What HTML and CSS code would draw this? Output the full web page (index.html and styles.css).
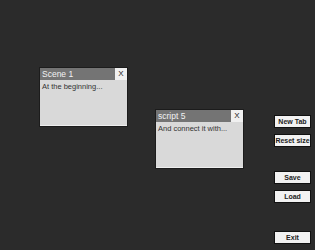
FILE: index.html
```
<!DOCTYPE html>
<html lang="en">
<head>
  <meta charset="UTF-8" />
  <meta name="viewport" content="width=device-width, initial-scale=1.0" />
  <title>Node Editor</title>
  <link rel="stylesheet" href="styles.css">
</head>
<body>
  <div class="canvas">
    <div class="node" style="left: 39px; top: 67px;">
      <div class="node-head">
        <span class="node-title">Scene 1</span>
        <button class="node-close">X</button>
      </div>
      <div class="node-body">At the beginning...</div>
    </div>
    <div class="node" style="left: 155px; top: 109px;">
      <div class="node-head">
        <span class="node-title">script 5</span>
        <button class="node-close">X</button>
      </div>
      <div class="node-body">And connect it with...</div>
    </div>
  </div>

  <div class="toolbar">
    <button class="tool-btn">New Tab</button>
    <button class="tool-btn">Reset size</button>
    <button class="tool-btn gap">Save</button>
    <button class="tool-btn">Load</button>
    <button class="tool-btn gap-lg">Exit</button>
  </div>
</body>
</html>
```

FILE: styles.css
```
html, body {
  margin: 0;
  height: 100%;
}
body {
  display: flex;
  background-color: #2b2b2b;
  font-family: "Liberation Sans", Arial, sans-serif;
  overflow: hidden;
}
.canvas {
  position: relative;
  flex: 1;
}
.node {
  position: absolute;
  width: 87px;
  border: 1px solid #1c1c1c;
  background-color: #d9d9d9;
}
.node-head {
  display: flex;
  height: 12px;
  background-color: #747474;
}
.node-title {
  flex: 1;
  color: #f2f2f2;
  font-size: 8.5px;
  line-height: 12px;
  padding-left: 2px;
}
.node-close {
  width: 12px;
  height: 12px;
  margin: 0;
  padding: 0;
  border: 0;
  background-color: #f0f0f0;
  color: #222;
  font-family: "Liberation Sans", Arial, sans-serif;
  font-size: 8px;
  line-height: 12px;
}
.node-body {
  height: 41px;
  padding: 2px 2px;
  font-size: 7.5px;
  color: #333;
  border-bottom: 1px solid #eee;
}
.toolbar {
  display: flex;
  flex-direction: column;
  width: 37px;
  padding: 115px 4px 0 0;
}
.tool-btn {
  height: 13px;
  margin: 0 0 6px 0;
  padding: 0;
  border: 1px solid #111;
  background-color: #f2f2f2;
  color: #222;
  font-family: "Liberation Sans", Arial, sans-serif;
  font-size: 7px;
  font-weight: bold;
  line-height: 11px;
  white-space: nowrap;
}
.tool-btn.gap {
  margin-top: 18px;
}
.tool-btn.gap-lg {
  margin-top: 22px;
}
```
